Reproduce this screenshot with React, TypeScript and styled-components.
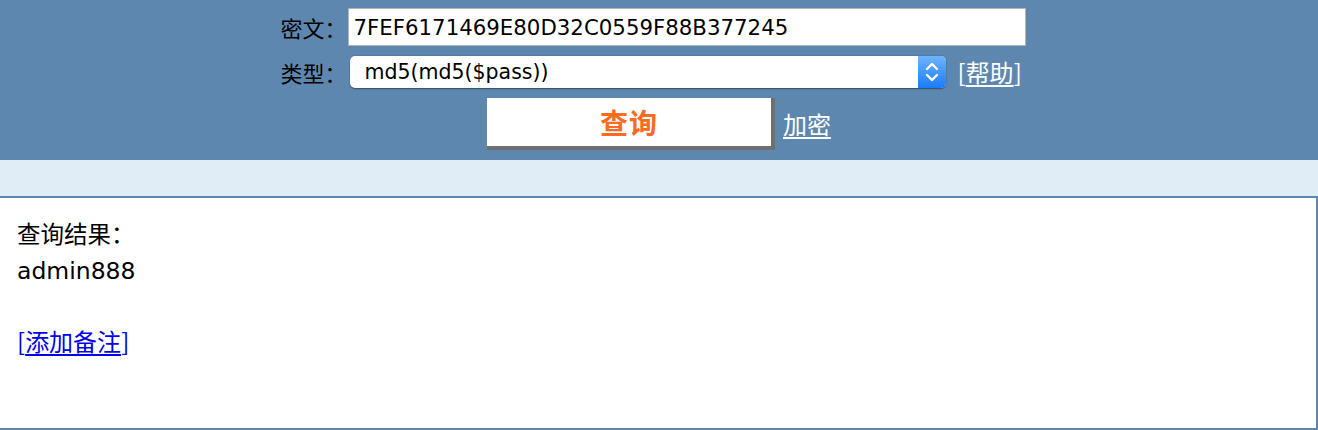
import React from "react";
import styled, { createGlobalStyle } from "styled-components";

const Global = createGlobalStyle`
  html, body { margin: 0; padding: 0; background: #ffffff; }
  body { font-family: "DejaVu Sans", "Noto Sans CJK SC", sans-serif; color: #000; }
`;

const Page = styled.div`
  width: 1318px;
  height: 430px;
  display: flex;
  flex-direction: column;
  overflow: hidden;
`;

const Header = styled.header`
  background: #5e87b0;
  padding: 8px 0 10px;
  display: flex;
  flex-direction: column;
  align-items: center;
  gap: 10px;
`;

const FieldGrid = styled.div`
  display: grid;
  grid-template-columns: auto auto;
  column-gap: 1px;
  row-gap: 10px;
  align-items: center;
  margin-left: -12px;
`;

const Label = styled.span`
  font-family: "Noto Sans CJK SC", sans-serif;
  font-size: 22px;
  line-height: 1;
  text-align: left;
  color: #000;
`;

const TextInput = styled.div`
  box-sizing: border-box;
  width: 678px;
  height: 38px;
  background: #fff;
  border: 1px solid #b4b4b4;
  padding-left: 5px;
  display: flex;
  align-items: center;
  font-family: "DejaVu Sans", sans-serif;
  font-size: 21.3px;
  color: #000;
`;

const SelectRow = styled.div`
  display: flex;
  align-items: center;
  gap: 12px;
  padding-left: 2px;
`;

const Select = styled.div`
  box-sizing: border-box;
  width: 596px;
  height: 32px;
  background: #fff;
  border-radius: 5px;
  box-shadow: 0 0.5px 1.5px rgba(0, 0, 0, 0.45);
  display: flex;
  align-items: center;
  overflow: hidden;
`;

const SelectText = styled.span`
  flex: 1;
  padding-left: 15px;
  font-family: "DejaVu Sans", sans-serif;
  font-size: 20.5px;
  color: #000;
`;

const SelectArrow = styled.span`
  width: 28px;
  height: 100%;
  background: linear-gradient(#6db4fb, #1b7cfb);
  display: flex;
  align-items: center;
  justify-content: center;
`;

const Bracketed = styled.span<{ $color: string }>`
  font-family: "Noto Sans CJK SC", "DejaVu Sans", sans-serif;
  font-size: 24px;
  color: ${(p) => p.$color};
  line-height: 1;
`;

const HeadLink = styled.a`
  font-family: "Noto Sans CJK SC", "DejaVu Sans", sans-serif;
  font-size: 24px;
  color: #fff;
  text-decoration: underline;
  text-underline-offset: 3px;
  line-height: 1;
`;

const InnerLink = styled.a`
  color: inherit;
  text-decoration: underline;
  text-underline-offset: 3px;
`;

const ActionRow = styled.div`
  display: flex;
  align-items: center;
  gap: 8px;
`;

const QueryButton = styled.button`
  box-sizing: border-box;
  width: 288px;
  height: 52px;
  background: #fff;
  border-width: 0 4px 4px 0;
  border-style: solid;
  border-color: #fff #6f6f6f #6f6f6f #fff;
  padding: 0;
  font-family: "Noto Sans CJK SC", sans-serif;
  font-weight: 700;
  font-size: 28px;
  color: #ff6a22;
  letter-spacing: 1px;
  cursor: pointer;
`;

const Band = styled.div`
  height: 36px;
  background: #e1edf6;
`;

const ResultBox = styled.section`
  flex: 1;
  box-sizing: border-box;
  border-top: 2px solid #5e87b0;
  border-right: 2px solid #5e87b0;
  border-bottom: 2px solid #5e87b0;
  padding: 19px 17px;
  font-family: "DejaVu Sans", "Noto Sans CJK SC", sans-serif;
  font-size: 23.5px;
  line-height: 36px;
`;

const Line = styled.div`
  min-height: 36px;
`;

const Chevrons = () => (
  <svg width="16" height="24" viewBox="0 0 16 24" fill="none" stroke="#fff" strokeWidth="2.4" strokeLinecap="round" strokeLinejoin="round">
    <polyline points="3,9 8,4 13,9" />
    <polyline points="3,15 8,20 13,15" />
  </svg>
);

export default function App() {
  return (
    <Page>
      <Global />
      <Header>
        <FieldGrid>
          <Label>密文：</Label>
          <TextInput>7FEF6171469E80D32C0559F88B377245</TextInput>
          <Label>类型：</Label>
          <SelectRow>
            <Select>
              <SelectText>md5(md5($pass))</SelectText>
              <SelectArrow>
                <Chevrons />
              </SelectArrow>
            </Select>
            <Bracketed $color="#fff">
              [<InnerLink href="#">帮助</InnerLink>]
            </Bracketed>
          </SelectRow>
        </FieldGrid>
        <ActionRow>
          <QueryButton>查询</QueryButton>
          <HeadLink href="#">加密</HeadLink>
        </ActionRow>
      </Header>
      <Band />
      <ResultBox>
        <Line>查询结果：</Line>
        <Line>admin888</Line>
        <Line />
        <Line>
          <Bracketed $color="#0000ee">
            [<InnerLink href="#">添加备注</InnerLink>]
          </Bracketed>
        </Line>
      </ResultBox>
    </Page>
  );
}
